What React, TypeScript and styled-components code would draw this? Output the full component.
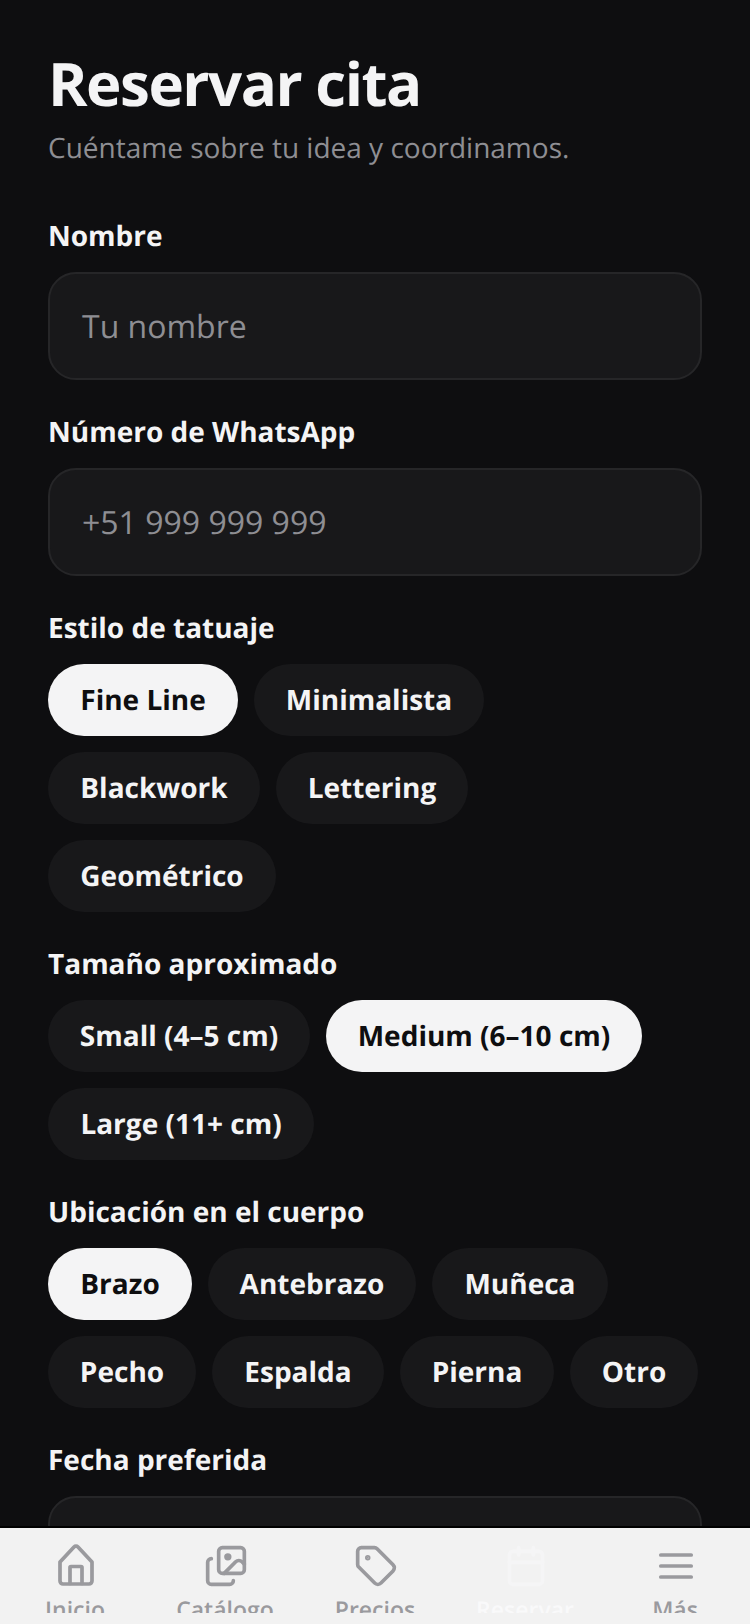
import React from "react";
import styled, { createGlobalStyle } from "styled-components";
import { Images, Tag, Calendar } from "lucide-react";

const Global = createGlobalStyle`
  html, body { margin: 0; padding: 0; background: #0e0e10; height: 100%; overflow: hidden; }
  body { font-family: "Open Sans", "Noto Sans", sans-serif; text-rendering: geometricPrecision; }
  * { box-sizing: border-box; }
`;
const Screen = styled.div`
  width: 750px; height: 1624px; display: flex; flex-direction: column; overflow: hidden; background: #0e0e10;
`;
const Content = styled.main`
  flex: 1; min-height: 0; overflow: hidden; padding: 47px 48px 0;
`;
const Title = styled.h1`
  margin: 0; font-size: 60px; line-height: 72px; font-weight: 700; color: #f4f4f5; letter-spacing: -1.5px;
`;
const Subtitle = styled.p`
  margin: 11px 0 0; font-size: 28px; line-height: 36px; color: #8e8e93;
`;
const Label = styled.div`
  margin: 34px 0 18px; font-size: 28px; line-height: 36px; font-weight: 700; color: #f4f4f5;
`;
const FirstLabel = styled(Label)`
  margin-top: 52px;
`;
const Field = styled.div`
  height: 108px; border-radius: 28px; background: #18181a; border: 2px solid #262628;
  padding: 0 32px; display: flex; align-items: center; font-size: 32px; color: #8e8e93;
`;
const Chips = styled.div`
  display: flex; flex-wrap: wrap; gap: 16px;
`;
const Chip = styled.div<{ $on?: boolean; $w: number }>`
  width: ${p => p.$w}px; height: 72px; border-radius: 36px; display: flex; align-items: center; justify-content: center;
  font-size: 28px; font-weight: 700; white-space: nowrap;
  background: ${p => (p.$on ? "#f4f4f5" : "#18181a")};
  color: ${p => (p.$on ? "#0e0e10" : "#f4f4f5")};
`;
const TabBar = styled.nav`
  flex: none; height: 98px; background: #f2f2f2; display: flex; border-top: 2px solid #000;
`;
const Tab = styled.div<{ $on?: boolean }>`
  flex: 1; height: 85px; overflow: hidden; padding-top: 16px; display: flex; flex-direction: column; align-items: center; gap: 6px;
  font-size: 23px; line-height: 30px; font-weight: 600; color: ${p => (p.$on ? "#f9f9fa" : "#9a9a9e")};
  svg { flex: none; margin-left: 2px; }
`;
const HomeIcon = () => (
  <svg width="44" height="44" viewBox="2 3.5 44 44" fill="none" stroke="currentColor" strokeWidth="3.7" strokeLinecap="round" strokeLinejoin="round">
    <path d="M8 21.5 22 6.5a2.8 2.8 0 0 1 4 0l14 15v19a3 3 0 0 1-3 3H11a3 3 0 0 1-3-3z" />
    <path d="M18 43V27a1 1 0 0 1 1-1h10a1 1 0 0 1 1 1v16" />
  </svg>
);
const MenuIcon = () => (
  <svg width="44" height="44" viewBox="0 0 44 44" fill="none" stroke="currentColor" strokeWidth="3.7" strokeLinecap="round">
    <path d="M6.8 11h30.4M6.8 22h30.4M6.8 33h30.4" />
  </svg>
);
const CalendarFaint = styled(Calendar)`
  color: #f5f5f6;
`;
const groups = [
  { label: "Estilo de tatuaje", on: "Fine Line", items: [["Fine Line", 190], ["Minimalista", 230], ["Blackwork", 212], ["Lettering", 192], ["Geométrico", 228]] },
  { label: "Tamaño aproximado", on: "Medium (6–10 cm)", items: [["Small (4–5 cm)", 262], ["Medium (6–10 cm)", 316], ["Large (11+ cm)", 266]] },
  { label: "Ubicación en el cuerpo", on: "Brazo", items: [["Brazo", 144], ["Antebrazo", 208], ["Muñeca", 176], ["Pecho", 148], ["Espalda", 172], ["Pierna", 154], ["Otro", 128]] },
] as { label: string; on: string; items: [string, number][] }[];
export default function App() {
  return (
    <Screen>
      <Global />
      <Content>
        <Title>Reservar cita</Title>
        <Subtitle>Cuéntame sobre tu idea y coordinamos.</Subtitle>
        <FirstLabel>Nombre</FirstLabel>
        <Field>Tu nombre</Field>
        <Label>Número de WhatsApp</Label>
        <Field>+51 999 999 999</Field>
        {groups.map(g => (
          <React.Fragment key={g.label}>
            <Label>{g.label}</Label>
            <Chips>{g.items.map(([t, w]) => <Chip key={t} $w={w} $on={t === g.on}>{t}</Chip>)}</Chips>
          </React.Fragment>
        ))}
        <Label>Fecha preferida</Label>
        <Field />
      </Content>
      <TabBar>
        <Tab><HomeIcon />Inicio</Tab>
        <Tab><Images size={44} />Catálogo</Tab>
        <Tab><Tag size={44} />Precios</Tab>
        <Tab $on><CalendarFaint size={44} />Reservar</Tab>
        <Tab><MenuIcon />Más</Tab>
      </TabBar>
    </Screen>
  );
}
